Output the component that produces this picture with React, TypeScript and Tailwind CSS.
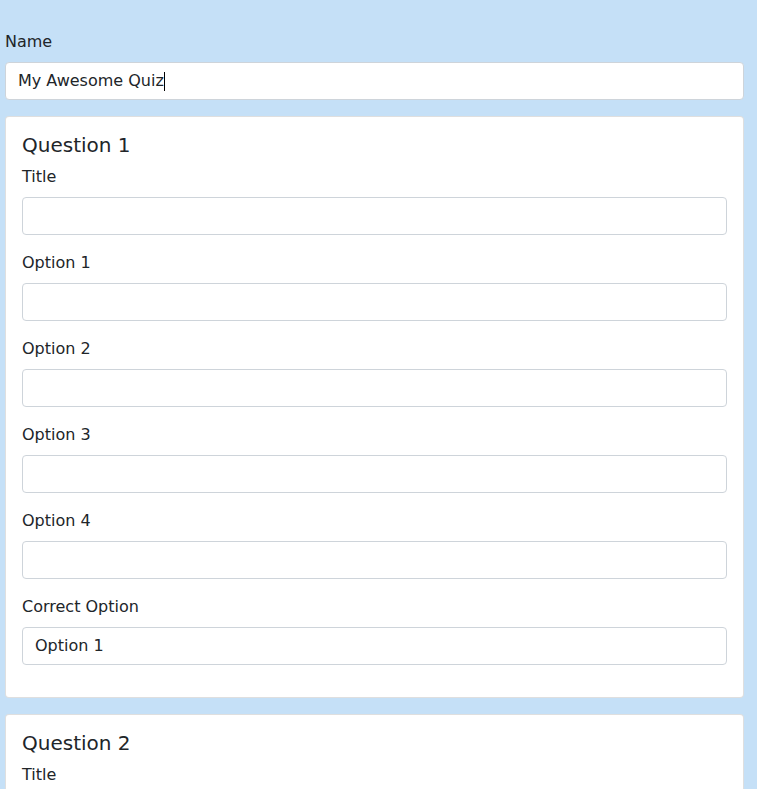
import React from "react";

const font = { fontFamily: '"DejaVu Sans", sans-serif' };

function Field({ label, value, caret }: { label: string; value?: string; caret?: boolean }) {
  return (
    <div className="mb-4">
      <div className="mb-2 h-6 text-base leading-6 text-[#212529]">{label}</div>
      <div className="flex h-[38px] items-center rounded border border-[#ced4da] bg-white px-3 text-base leading-6 text-[#212529]">
        <span>{value}</span>
        {caret && <span className="ml-[-1px] inline-block h-[19px] w-px bg-[#000]" />}
      </div>
    </div>
  );
}

function QuestionCard({ n }: { n: number }) {
  return (
    <div className="mb-4 rounded border border-[rgba(0,0,0,0.125)] bg-white p-4">
      <div className="mb-2 h-6 text-[20px] leading-6 text-[#212529]">Question {n}</div>
      <Field label="Title" />
      <Field label="Option 1" />
      <Field label="Option 2" />
      <Field label="Option 3" />
      <Field label="Option 4" />
      <Field label="Correct Option" value="Option 1" />
    </div>
  );
}

export default function App() {
  return (
    <div className="min-h-screen bg-[#c5e0f7]" style={font}>
      <div className="ml-[5px] w-[739px] pt-[30px]">
        <div className="mb-2 h-6 text-base leading-6 text-[#212529]">Name</div>
        <div className="mb-4 flex h-[38px] items-center rounded border border-[#ced4da] bg-white px-3 text-base leading-6 text-[#212529]">
          <span>My Awesome Quiz</span>
          <span className="inline-block h-[19px] w-px bg-black" />
        </div>
        <QuestionCard n={1} />
        <QuestionCard n={2} />
      </div>
    </div>
  );
}
